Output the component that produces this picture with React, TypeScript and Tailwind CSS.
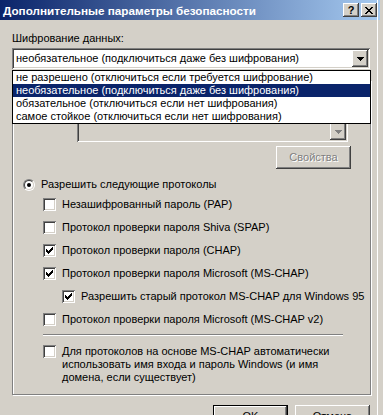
import React from "react";

const raised =
  "shadow-[inset_-1px_-1px_0_#404040,inset_1px_1px_0_#ffffff,inset_-2px_-2px_0_#808080,inset_2px_2px_0_#d4d0c8]";
const sunken =
  "shadow-[inset_1px_1px_0_#808080,inset_-1px_-1px_0_#ffffff,inset_2px_2px_0_#404040,inset_-2px_-2px_0_#d4d0c8]";

const Check = () => (
  <svg width="7" height="7" viewBox="0 0 7 7" shapeRendering="crispEdges">
    <path
      d="M0 2h1v3h-1z M1 3h1v3h-1z M2 4h1v3h-1z M3 3h1v3h-1z M4 2h1v3h-1z M5 1h1v3h-1z M6 0h1v3h-1z"
      fill="#000"
    />
  </svg>
);

const Arrow = ({ disabled = false }: { disabled?: boolean }) => (
  <svg width="7" height="4" viewBox="0 0 7 4" shapeRendering="crispEdges">
    <path d="M0 0h7v1h-7z M1 1h5v1h-5z M2 2h3v1h-3z M3 3h1v1h-1z" fill={disabled ? "#808080" : "#000"} />
  </svg>
);

const CheckBox = ({ checked = false }: { checked?: boolean }) => (
  <div className={`w-[13px] h-[13px] shrink-0 bg-white flex items-center justify-center ${sunken}`}>
    {checked && <Check />}
  </div>
);

const Radio = ({ checked = false }: { checked?: boolean }) => (
  <div className="w-[12px] h-[12px] shrink-0 rounded-full border border-t-[#808080] border-l-[#808080] border-b-white border-r-white">
    <div className="w-full h-full rounded-full bg-white border border-t-[#404040] border-l-[#404040] border-b-[#d4d0c8] border-r-[#d4d0c8] flex items-center justify-center">
      {checked && <div className="w-[4px] h-[4px] rounded-full bg-black" />}
    </div>
  </div>
);

const Row = ({
  checked,
  className = "",
  children,
}: {
  checked?: boolean;
  className?: string;
  children: React.ReactNode;
}) => (
  <div className={`flex items-center h-[13px] gap-[6px] ${className}`}>
    <CheckBox checked={checked} />
    <span className="whitespace-nowrap">{children}</span>
  </div>
);

const Button = ({
  label,
  disabled = false,
  isDefault = false,
}: {
  label: string;
  disabled?: boolean;
  isDefault?: boolean;
}) => (
  <div
    className={`w-[75px] h-[23px] shrink-0 bg-[#d4d0c8] flex items-center justify-center ${
      isDefault ? "border border-black" : ""
    }`}
  >
    <div className={`w-full h-full flex items-center justify-center ${raised}`}>
      <span
        className={
          disabled ? "text-[#808080] [text-shadow:1px_1px_0_#ffffff]" : "text-black"
        }
      >
        {label}
      </span>
    </div>
  </div>
);

export default function App() {
  return (
    <div className="w-[383px] h-[415px] overflow-hidden bg-[#d4d0c8] relative font-['Liberation_Sans',Arial,sans-serif] text-[11px] leading-[13px] text-black">
      {/* title bar */}
      <div className="h-[20px] w-[380px] flex items-center bg-[linear-gradient(to_right,#0a246a,#a6caf0)]">
        <span className="ml-[3px] font-bold text-[11.7px] text-white whitespace-nowrap">
          Дополнительные параметры безопасности
        </span>
        <div className="ml-auto mr-[3px] flex gap-[2px]">
          <div className={`w-[16px] h-[14px] bg-[#d4d0c8] flex items-center justify-center font-bold text-[11px] leading-none ${raised}`}>
            ?
          </div>
          <div className={`w-[16px] h-[14px] bg-[#d4d0c8] flex items-center justify-center ${raised}`}>
            <svg width="8" height="7" viewBox="0 0 8 7" shapeRendering="crispEdges">
              <path
                d="M0 0h2v1h-2z M1 1h2v1h-2z M2 2h4v1h-4z M3 3h2v1h-2z M2 4h4v1h-4z M1 5h2v1h-2z M0 6h2v1h-2z M6 0h2v1h-2z M5 1h2v1h-2z M5 5h2v1h-2z M6 6h2v1h-2z"
                fill="#000"
              />
            </svg>
          </div>
        </div>
      </div>
      <div className="absolute right-[5px] top-0 bottom-0 w-px bg-white" />

      {/* encryption */}
      <div className="ml-[12px] mt-[12px] whitespace-nowrap">Шифрование данных:</div>
      <div className={`ml-[12px] mt-[3px] w-[358px] h-[21px] bg-white flex items-center p-[2px] ${sunken}`}>
        <span className="ml-[2px] whitespace-nowrap">необязательное (подключиться даже без шифрования)</span>
        <div className={`ml-auto w-[16px] h-[17px] bg-[#d4d0c8] flex items-center justify-center ${raised}`}>
          <Arrow />
        </div>
      </div>

      {/* group box (top part lies under the open list) */}
      <div className="ml-[12px] mt-[11px] w-[359px] border border-[#808080] shadow-[inset_1px_1px_0_#ffffff,1px_1px_0_#ffffff] flex flex-col pb-[10px]">
        <div className="h-[29px]" />
        <div className={`ml-[64px] mt-[11px] w-[271px] h-[21px] bg-[#d4d0c8] flex items-center justify-end p-[2px] ${sunken}`}>
          <div className={`w-[16px] h-[17px] bg-[#d4d0c8] flex items-center justify-center ${raised}`}>
            <Arrow disabled />
          </div>
        </div>
        <div className="ml-[263px] mt-[4px]">
          <Button label="Свойства" disabled />
        </div>

        <div className="ml-[10px] mt-[9px] flex items-center h-[13px] gap-[6px]">
          <Radio checked />
          <span className="whitespace-nowrap">Разрешить следующие протоколы</span>
        </div>

        <Row className="ml-[30px] mt-[7px]">Незашифрованный пароль (PAP)</Row>
        <Row className="ml-[30px] mt-[10px]">Протокол проверки пароля Shiva (SPAP)</Row>
        <Row className="ml-[30px] mt-[10px]" checked>
          Протокол проверки пароля (CHAP)
        </Row>
        <Row className="ml-[30px] mt-[10px]" checked>
          Протокол проверки пароля Microsoft (MS-CHAP)
        </Row>
        <Row className="ml-[49px] mt-[10px]" checked>
          Разрешить старый протокол MS-CHAP для Windows 95
        </Row>
        <Row className="ml-[30px] mt-[10px]">Протокол проверки пароля Microsoft (MS-CHAP v2)</Row>

        <div className="ml-[30px] mt-[8px] w-[300px] h-[2px] border-t border-[#808080] bg-white" />

        <div className="ml-[30px] mt-[9px] flex items-start gap-[6px]">
          <CheckBox />
          <span className="whitespace-nowrap">
            Для протоколов на основе MS-CHAP автоматически
            <br />
            использовать имя входа и пароль Windows (и имя
            <br />
            домена, если существует)
          </span>
        </div>
      </div>

      {/* buttons */}
      <div className="ml-[213px] mt-[10px] flex gap-[7px]">
        <Button label="OK" isDefault />
        <Button label="Отмена" />
      </div>

      {/* dropdown list */}
      <div className="absolute left-[12px] top-[70px] w-[359px] h-[54px] bg-white border border-black flex flex-col">
        <div className="h-[13px] pl-[3px] whitespace-nowrap">не разрешено (отключиться если требуется шифрование)</div>
        <div className="h-[13px] pl-[3px] whitespace-nowrap bg-[#0a246a] text-white">
          необязательное (подключиться даже без шифрования)
        </div>
        <div className="h-[13px] pl-[3px] whitespace-nowrap">обязательное (отключиться если нет шифрования)</div>
        <div className="h-[13px] pl-[3px] whitespace-nowrap">самое стойкое (отключиться если нет шифрования)</div>
      </div>
    </div>
  );
}
